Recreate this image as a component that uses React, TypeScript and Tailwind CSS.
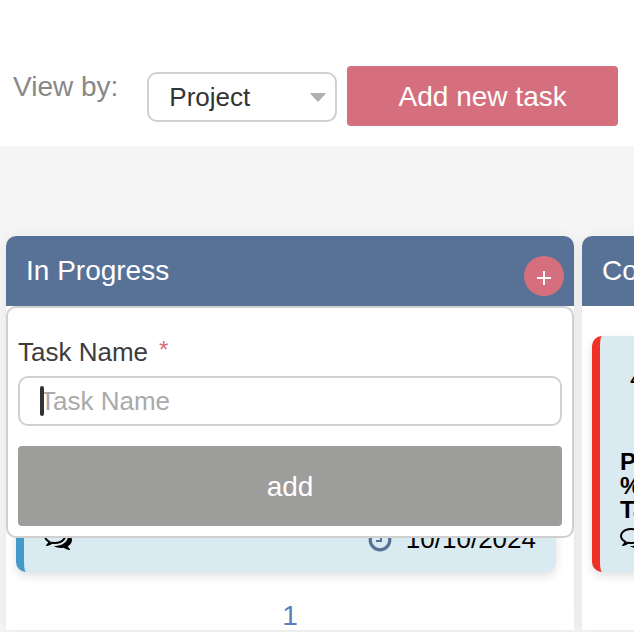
interface Task {
  title: string;
  project: string;
  completed: string;
  tasks: string;
  due: string;
  accent: string;
}

const inProgress: Task = {
  title: "Task",
  project: "Project:",
  completed: "% Completed:",
  tasks: "Tasks:",
  due: "10/10/2024",
  accent: "border-[#4499c8]",
};

const completed: Task = { ...inProgress, title: "4", accent: "border-[#ee3124]" };

function CommentsIcon() {
  return (
    <svg viewBox="0 0 1792 1792" className="size-7" fill="currentColor">
      <path d="M704 384q-153 0-286 52t-211.500 141-78.500 191q0 82 53 158t149 132l97 56-35 84q34-20 62-39l44-31 53 10q78 14 153 14 153 0 286-52t211.500-141 78.500-191-78.500-191-211.500-141-286-52zM704 256q191 0 353.500 68.500t256.500 186.500 94 257-94 257-256.500 186.500-353.500 68.500q-86 0-176-16-124 88-278 128-36 9-86 16h-3q-11 0-20.500-8t-11.500-21q-1-3-1-6.500t.5-6.500 2-6l2.500-5 3.500-5.500 4-5 4.500-5 4-4.500q5-6 23-25t26-29.500 22.500-29 25-38.500 20.500-44q-124-72-195-177t-71-224q0-139 94-257t256.500-186.500 353.500-68.500zM1526 1425q10 24 20.500 44t25 38.500 22.500 29 26 29.500 23 25q1 1 4 4.500t4.500 5 4 5 3.500 5.500l2.500 5 2 6 .5 6.500-1 6.500q-3 14-13 22t-22 7q-50-7-86-16-154-40-278-128-90 16-176 16-271 0-472-132 58 4 88 4 161 0 309-45t264-129q125-92 192-212t67-254q0-77-23-152 129 71 204 178t75 230q0 120-71 224.500t-195 176.500z" />
    </svg>
  );
}

function ClockIcon() {
  return (
    <svg
      viewBox="0 0 24 24"
      className="mt-[2px] size-6 text-[#587297]"
      fill="none"
      stroke="currentColor"
    >
      <circle cx="12" cy="12" r="9.8" strokeWidth="3.2" />
      <path d="M13 6v7H8" strokeWidth="2" />
    </svg>
  );
}

function TaskCard({ task }: { task: Task }) {
  return (
    <article
      className={`ml-[10px] mr-[18px] flex h-[236px] flex-col rounded-[10px] border-l-8 bg-[#daeaf1] px-5 pb-[18px] shadow-[0_4px_10px_rgba(0,0,0,0.12)] ${task.accent}`}
    >
      <h3 className="pl-[10px] pt-[26px] text-[26px] leading-8">{task.title}</h3>
      <div className="mt-auto text-2xl/6 font-bold">
        <p>{task.project}</p>
        <p>{task.completed}</p>
        <p>{task.tasks}</p>
      </div>
      <div className="flex h-8 items-center">
        <CommentsIcon />
        <div className="ml-auto flex items-center gap-[14px] pt-[2px]">
          <ClockIcon />
          <time className="text-[26px] leading-8">{task.due}</time>
        </div>
      </div>
    </article>
  );
}

function NewTaskForm() {
  return (
    <form className="absolute inset-x-0 top-0 rounded-[10px] border-2 border-[#d0d0d0] bg-white px-[10px] pb-[10px] pt-7">
      <label
        htmlFor="task-name"
        className="flex gap-[11px] text-[26px] leading-8 text-[#3d3d3d]"
      >
        Task Name
        <span className="text-2xl/7 text-[#d66f7d]">*</span>
      </label>
      <div className="mt-2 flex h-[50px] items-center rounded-[10px] border-2 border-[#d0d0d0] pl-5">
        <span className="z-10 h-[30px] w-1 shrink-0 rounded-sm bg-[#333]" />
        <input
          id="task-name"
          placeholder="Task Name"
          className="-ml-1 min-w-0 flex-1 bg-transparent text-[26px] leading-8 outline-none placeholder:text-[#aaa]"
        />
      </div>
      <button
        type="button"
        className="mt-5 h-20 w-full rounded-sm bg-[#9d9d9b] pt-[2px] text-[28px] text-white"
      >
        add
      </button>
    </form>
  );
}

function Column({
  name,
  task,
  adding = false,
}: {
  name: string;
  task: Task;
  adding?: boolean;
}) {
  return (
    <section className="rounded-t-[10px] bg-white shadow-[0_2px_16px_rgba(0,0,0,0.06)]">
      <header className="flex h-[70px] items-center justify-between rounded-t-[10px] bg-[#587297] pl-5 pr-[10px] text-[28px] text-white">
        <h2>{name}</h2>
        <button
          type="button"
          aria-label="Add task"
          className="mt-[10px] flex size-10 items-center justify-center rounded-full bg-[#d66f7d]"
        >
          <svg
            viewBox="0 0 14 14"
            className="mt-1 size-[14px]"
            stroke="currentColor"
            strokeWidth="2"
          >
            <path d="M7 0v14M0 7h14" />
          </svg>
        </button>
      </header>
      <div className="relative pt-[30px]">
        <TaskCard task={task} />
        <nav className="flex h-[58px] items-end justify-center">
          <a href="#" className="text-[28px] leading-7 text-[#5b7fbd]">
            1
          </a>
        </nav>
        {adding && <NewTaskForm />}
      </div>
    </section>
  );
}

export default function App() {
  return (
    <div className="min-h-screen overflow-hidden bg-[#f5f5f5] font-['Liberation_Sans',Arial,sans-serif]">
      <div className="flex items-center bg-white pb-5 pl-[13px] pr-4 pt-[66px]">
        <label
          htmlFor="view-by"
          className="mb-[18px] mr-[29px] shrink-0 text-[28px] leading-10 text-[#888]"
        >
          View by:
        </label>
        <div className="relative mr-[10px] w-[190px] shrink-0 pt-[2px]">
          <select
            id="view-by"
            className="block h-[50px] w-full appearance-none rounded-[10px] border-2 border-[#d0d0d0] bg-white pl-5 text-[26px] text-[#333]"
          >
            <option>Project</option>
          </select>
          <svg
            viewBox="0 0 16 9"
            className="absolute right-[11px] top-[23px] h-[9px] w-4 fill-[#b0b0b0]"
          >
            <path d="M1 0h14q1 0 .5 1L9 8q-1 1-2 0L.5 1Q0 0 1 0Z" />
          </svg>
        </div>
        <button
          type="button"
          className="h-[60px] flex-1 rounded-sm bg-[#d66f7d] pt-[2px] text-[28px] text-white"
        >
          Add new task
        </button>
      </div>
      <main className="grid auto-cols-[calc(100%-60px)] grid-flow-col gap-2 pl-[6px] pt-[90px]">
        <Column name="In Progress" task={inProgress} adding />
        <Column name="Completed" task={completed} />
      </main>
    </div>
  );
}
